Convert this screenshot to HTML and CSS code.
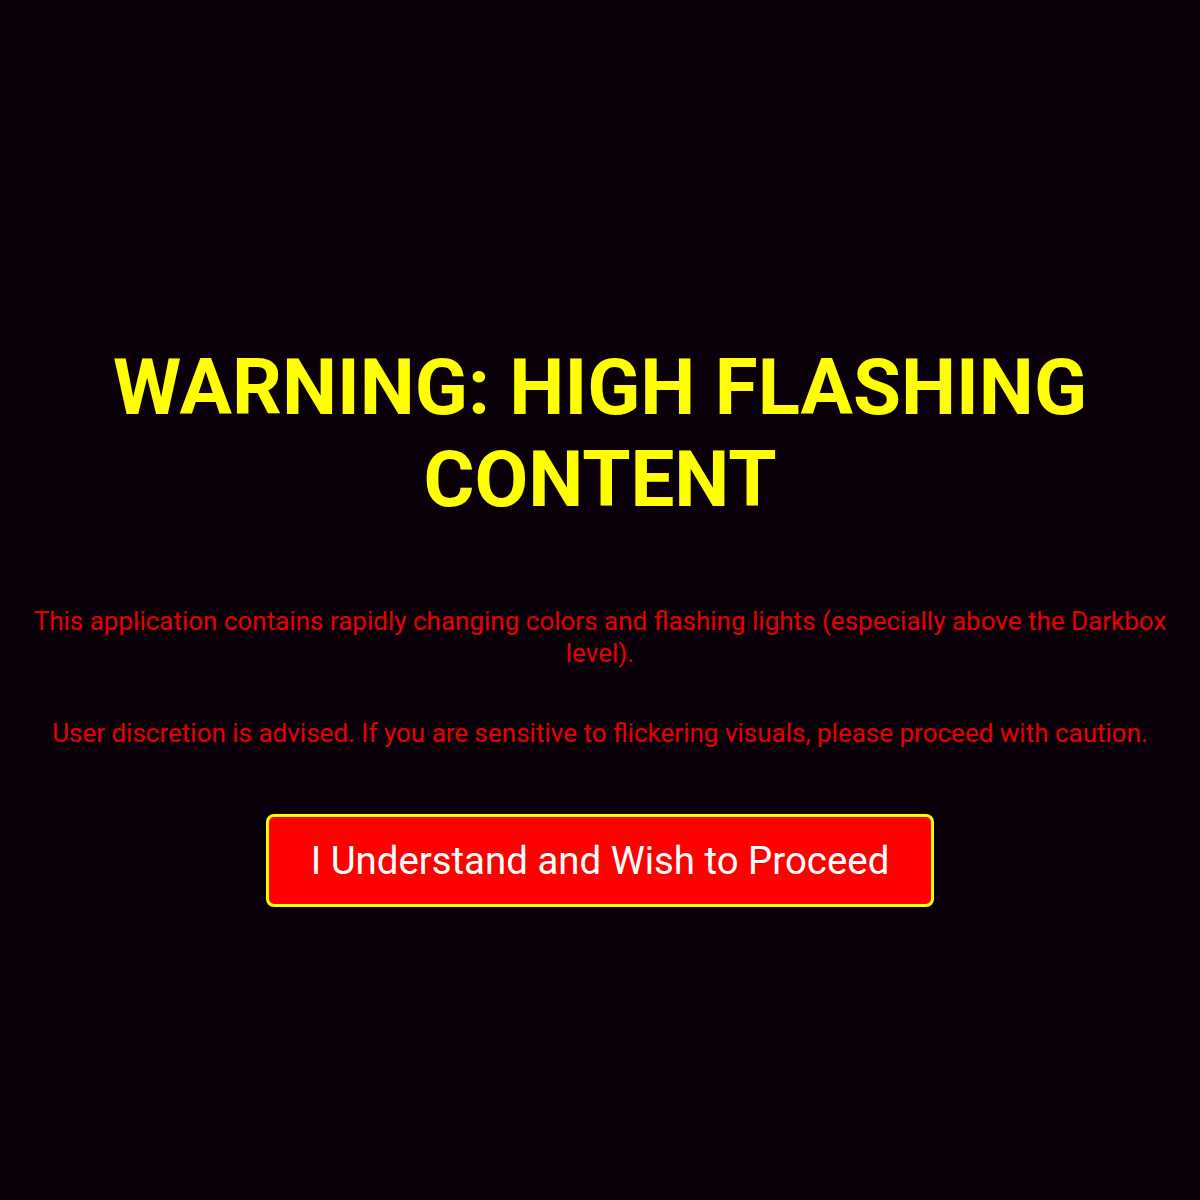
FILE: index.html
```html
<!DOCTYPE html>
<html lang="en">
<head>
<meta charset="utf-8">
<title>Warning</title>
<link rel="stylesheet" href="styles.css">
</head>
<body>
<main class="warning">
  <h1 class="warning-title">WARNING: HIGH FLASHING CONTENT</h1>
  <p class="warning-text">This application contains rapidly changing colors and flashing lights (especially above the Darkbox level).</p>
  <p class="warning-text">User discretion is advised. If you are sensitive to flickering visuals, please proceed with caution.</p>
  <button class="proceed-btn" type="button">I Understand and Wish to Proceed</button>
</main>
</body>
</html>
```

FILE: styles.css
```css
html, body {
  margin: 0;
  padding: 0;
  background: #0a000a;
}
body {
  font-family: Roboto, "Liberation Sans", sans-serif;
}
.warning {
  min-height: 1200px;
  box-sizing: border-box;
  padding: 342px 20px 0;
  display: flex;
  flex-direction: column;
  align-items: center;
  text-align: center;
}
.warning-title {
  margin: 0 0 79px;
  font-size: 78px;
  font-weight: 700;
  line-height: 92px;
  color: #ffff00;
}
.warning-text {
  margin: 0 0 48px;
  font-size: 26px;
  line-height: 32px;
  color: #e60000;
}
.warning-text:last-of-type {
  margin-bottom: 65px;
}
.proceed-btn {
  width: 668px;
  height: 93px;
  box-sizing: border-box;
  border: 3px solid #ffff00;
  border-radius: 8px;
  background: #ff0000;
  color: #ffffff;
  font-family: Roboto, "Liberation Sans", sans-serif;
  font-size: 38.4px;
  line-height: 44px;
  padding: 0;
  cursor: pointer;
}
```
